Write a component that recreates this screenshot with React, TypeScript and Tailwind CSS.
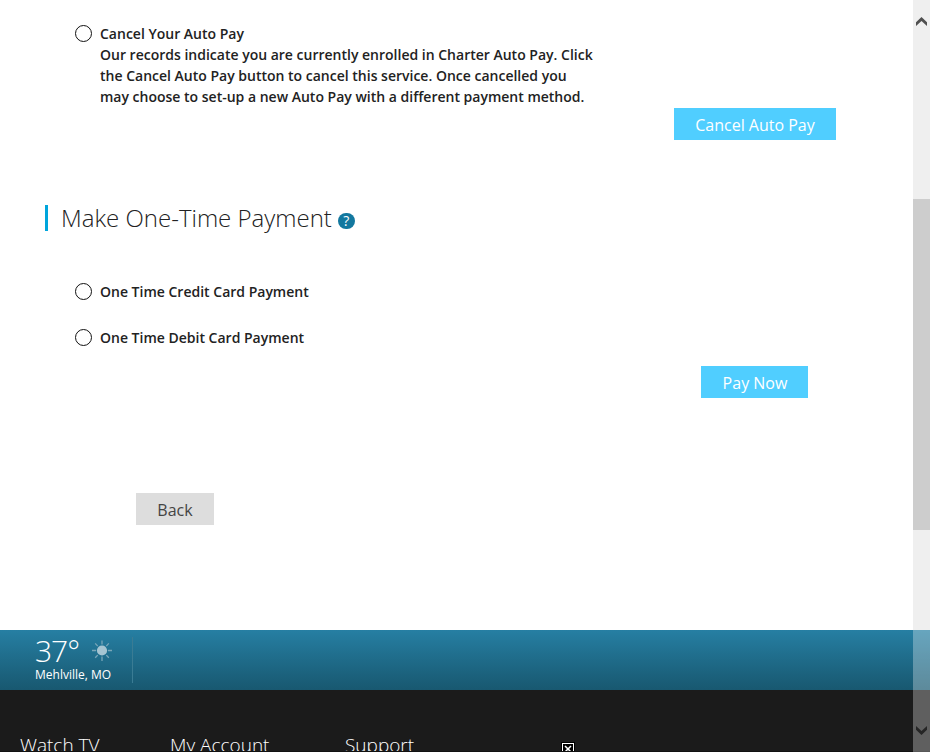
import type { ReactNode } from "react";

function RadioRow({ title, children }: { title: string; children?: ReactNode }) {
  return (
    <label className="flex items-start gap-2 pl-[75px] text-[14px] leading-[21px] font-semibold text-[#222]">
      <span className="mt-[2px] size-[17px] shrink-0 rounded-full border border-[#111] bg-white" />
      <span className="block whitespace-nowrap">
        <span className="block">{title}</span>
        {children}
      </span>
    </label>
  );
}

function SunIcon() {
  return (
    <svg width="20" height="22" viewBox="0 0 20 22" fill="none" className="shrink-0">
      <circle cx="10" cy="10.5" r="5.1" fill="#a6c5d2" />
      <g stroke="#79a6b8" strokeWidth="1.3">
        <path d="M10 0.5v4M10 16.5v4.5M0 10.5h4M16 10.5h4M3.2 3.4l2.5 2.7M16.8 3.4l-2.5 2.7M3.2 17.8l2.5-2.7M16.8 17.8l-2.5-2.7" />
      </g>
    </svg>
  );
}

function Scrollbar() {
  return (
    <div className="absolute inset-y-0 right-0 flex w-[17px] flex-col">
      <div className="flex h-[199px] justify-center bg-[#efefef] pt-[17px]">
        <svg width="11" height="9" viewBox="0 0 11 9">
          <path d="M0 5.2L5.5 0 11 5.2V9L5.5 4 0 9z" fill="#505050" />
        </svg>
      </div>
      <div className="h-[331px] bg-[#cdcdcd]" />
      <div className="h-[100px] bg-[#efefef]" />
      <div className="flex grow items-end justify-center bg-white/30 pb-[17px]">
        <svg width="11" height="9" viewBox="0 0 11 9">
          <path d="M0 3.8L5.5 9 11 3.8V0L5.5 5 0 0z" fill="#252525" />
        </svg>
      </div>
    </div>
  );
}

export default function App() {
  return (
    <div className="relative flex h-[752px] w-[930px] flex-col overflow-hidden bg-white font-['Open_Sans','Noto_Sans',sans-serif]">
      <main className="flex h-[630px] shrink-0 flex-col pt-[23px]">
        <RadioRow title="Cancel Your Auto Pay">
          <span className="block">Our records indicate you are currently enrolled in Charter Auto Pay. Click</span>
          <span className="block">the Cancel Auto Pay button to cancel this service. Once cancelled you</span>
          <span className="block">may choose to set-up a new Auto Pay with a different payment method.</span>
        </RadioRow>
        <button className="mt-[1px] ml-[674px] h-8 w-[162px] bg-[#50ceff] pt-[2px] text-[16px] leading-6 text-white">
          Cancel Auto Pay
        </button>
        <div className="mt-[65px] ml-[45px] flex h-[26px] items-center border-l-3 border-[#00a5dc] pl-[13px]">
          <h2 className="text-[24px] leading-[26px] font-light whitespace-nowrap text-[#222]">Make One-Time Payment</h2>
          <span className="mt-[6px] ml-[6px] flex h-4 w-[17px] items-center justify-center rounded-full bg-[#13789f] text-[14px] leading-none text-white">
            ?
          </span>
        </div>
        <div className="mt-[50px] flex flex-col gap-[25px]">
          <RadioRow title="One Time Credit Card Payment" />
          <RadioRow title="One Time Debit Card Payment" />
        </div>
        <button className="mt-[18px] ml-[701px] h-8 w-[107px] bg-[#50ceff] pt-[2px] pl-px text-[16px] leading-6 text-white">
          Pay Now
        </button>
        <button className="mt-[95px] ml-[136px] h-8 w-[78px] bg-[#ddd] pt-[2px] text-[16px] leading-6 text-[#444]">
          Back
        </button>
      </main>
      <section className="flex h-[60px] shrink-0 bg-linear-to-b from-[#267fa3] to-[#185870] pt-[7px] pl-[35px] text-white">
        <div className="h-[46px] w-[98px] border-r border-[#3a7c94]">
          <div className="flex h-[30px] items-start">
            <span className="-mt-px w-[57px] text-[30px] leading-[30px] font-light tracking-[-1px]">37°</span>
            <span className="mt-[3px]"><SunIcon /></span>
          </div>
          <div className="text-[12px] leading-4 whitespace-nowrap">Mehlville, MO</div>
        </div>
      </section>
      <footer className="flex h-[62px] shrink-0 items-start overflow-hidden border-b border-[#111] bg-[#1b1b1b] pt-[43px] pl-5 text-[19px] leading-6 font-light whitespace-nowrap text-white">
        <span className="w-[150px]">Watch TV</span>
        <span className="w-[175px]">My Account</span>
        <span className="w-[217px]">Support</span>
        <span className="mt-[10px] flex size-3 items-center justify-center border border-white bg-black ring-1 ring-black">
          <svg width="8" height="8" viewBox="0 0 8 8" stroke="#fff" strokeWidth="1.5">
            <path d="M1 1l6 6M7 1L1 7" />
          </svg>
        </span>
      </footer>
      <Scrollbar />
    </div>
  );
}
